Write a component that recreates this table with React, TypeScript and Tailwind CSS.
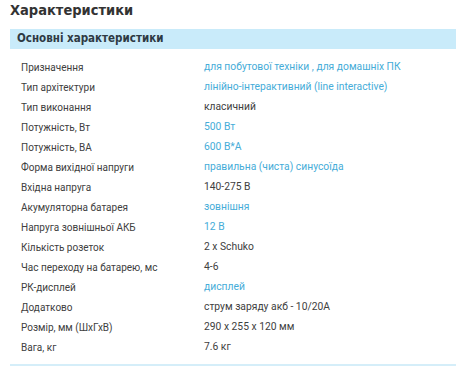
import React from 'react';

type Spec = { label: string; value: string; link?: boolean };

const SPECS: Spec[] = [
  { label: 'Призначення', value: 'для побутової техніки ,  для домашніх ПК', link: true },
  { label: 'Тип архітектури', value: 'лінійно-інтерактивний (line interactive)', link: true },
  { label: 'Тип виконання', value: 'класичний' },
  { label: 'Потужність, Вт', value: '500 Вт', link: true },
  { label: 'Потужність, ВА', value: '600 В*А', link: true },
  { label: 'Форма вихідної напруги', value: 'правильна (чиста) синусоїда', link: true },
  { label: 'Вхідна напруга', value: '140-275 В' },
  { label: 'Акумуляторна батарея', value: 'зовнішня', link: true },
  { label: 'Напруга зовнішньої АКБ', value: '12 В', link: true },
  { label: 'Кількість розеток', value: '2 x Schuko' },
  { label: 'Час переходу на батарею, мс', value: '4-6' },
  { label: 'РК-дисплей', value: 'дисплей', link: true },
  { label: 'Додатково', value: 'струм заряду акб - 10/20А' },
  { label: 'Розмір, мм (ШхГхВ)', value: '290 x 255 x 120 мм' },
  { label: 'Вага, кг', value: '7.6 кг' },
];

export default function App() {
  return (
    <div className="w-[463px] h-[367px] overflow-hidden bg-white font-['Roboto',sans-serif] text-[#333]">
      <h2 className="pl-[10px] pt-[1px] font-['DejaVu_Sans_Condensed','DejaVu_Sans',sans-serif] text-[14.5px] leading-[19px] font-bold text-[#333]">
        Характеристики
      </h2>

      <div className="ml-[10px] mr-[7px] mt-[9px] h-[20px] flex items-center bg-[#c9ebfa] pl-[7px]">
        <span className="font-['DejaVu_Sans_Condensed','DejaVu_Sans',sans-serif] text-[11.5px] font-bold text-[#2e3a44]">
          Основні характеристики
        </span>
      </div>

      <div className="mt-[8px] pb-[1px]">
        {SPECS.map((s) => (
          <div key={s.label} className="flex h-[20px] items-center">
            <div className="w-[204px] pl-[21px] text-[10px] text-[#404040]">{s.label}</div>
            <div className={`text-[10.3px] ${s.link ? 'text-[#45acd8]' : 'text-[#404040]'}`}>
              {s.value}
            </div>
          </div>
        ))}
      </div>

      <div className="ml-[10px] mr-[7px] mt-[6px] h-[2px] bg-[#d5eef9]" />
    </div>
  );
}
